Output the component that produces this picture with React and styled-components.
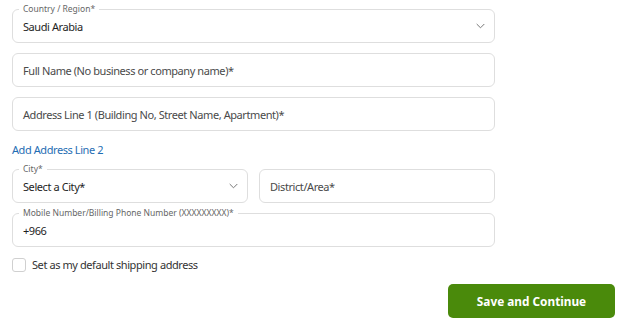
import React, { useState } from 'react';
import styled, { createGlobalStyle } from 'styled-components';

const GlobalStyle = createGlobalStyle`
  body {
    margin: 0;
    background: #fff;
    font-family: "Noto Sans", "Open Sans", sans-serif;
    color: #222;
  }
`

const Page = styled.div`
  display: flex;
  flex-direction: column;
  padding: 9px 9px 0 12px;
  width: 624px;
  box-sizing: border-box;
`

const Form = styled.div`
  display: flex;
  flex-direction: column;
  width: 483px;
`

const Row = styled.div`
  display: flex;
  gap: 11px;
  margin-top: ${p => p.$top || 0}px;
`

const Field = styled.div`
  position: relative;
  display: flex;
  align-items: center;
  box-sizing: border-box;
  height: 34px;
  width: ${p => p.$width ? `${p.$width}px` : 'auto'};
  flex: ${p => p.$grow ? '1 1 0' : 'none'};
  border: 1px solid #dedede;
  border-radius: 6px;
  padding: 0 9px 0 10px;
  margin-top: ${p => p.$top || 0}px;
  font-size: 11px;
  letter-spacing: -0.42px;
  color: ${p => p.$placeholder ? '#4a4a4a' : '#1e1e1e'};
`

const Legend = styled.span`
  position: absolute;
  top: -7px;
  left: 6px;
  padding: 0 4px;
  background: #fff;
  font-size: 8.5px;
  letter-spacing: 0;
  line-height: 12px;
  color: #666;
  white-space: nowrap;
`

const Value = styled.span`
  flex: 1;
  white-space: nowrap;
  padding-top: ${p => p.$shift ? 1 : 0}px;
`

const Link = styled.a`
  margin-top: 11px;
  font-size: 11px;
  letter-spacing: -0.42px;
  line-height: 16px;
  color: #1f6db3;
  text-decoration: none;
  cursor: pointer;
`

const CheckRow = styled.label`
  display: flex;
  align-items: center;
  gap: 6px;
  margin-top: 11px;
  font-size: 11px;
  letter-spacing: -0.42px;
  line-height: 14px;
  color: #333;
  cursor: pointer;
`

const Box = styled.span`
  width: 14px;
  height: 14px;
  box-sizing: border-box;
  border: 1px solid #d0d0d0;
  border-radius: 3px;
  background: ${p => p.$on ? '#4a8a0b' : '#fff'};
`

const Button = styled.button`
  align-self: flex-end;
  margin-top: 12px;
  width: 167px;
  height: 34px;
  border: none;
  border-radius: 5px;
  background: #4a8a0b;
  color: #fff;
  font-family: "Noto Sans", "Open Sans", sans-serif;
  font-weight: 700;
  font-size: 11.8px;
  cursor: pointer;
`

const Chevron = () => (
  <svg width="9" height="6" viewBox="0 0 9 6" fill="none">
    <path d="M0.7 1l3.8 3.8L8.3 1" stroke="#777" strokeWidth="1" />
  </svg>
)

const App = () => {
  const [isDefault, setIsDefault] = useState(false)

  return (
    <Page>
      <GlobalStyle />
      <Form>
        <Field>
          <Legend>Country / Region*</Legend>
          <Value $shift>Saudi Arabia</Value>
          <Chevron />
        </Field>
        <Field $top={10} $placeholder>
          <Value>Full Name (No business or company name)*</Value>
        </Field>
        <Field $top={10} $placeholder>
          <Value>Address Line 1 (Building No, Street Name, Apartment)*</Value>
        </Field>
        <Link>Add Address Line 2</Link>
        <Row $top={11}>
          <Field $width={236}>
            <Legend>City*</Legend>
            <Value $shift>Select a City*</Value>
            <Chevron />
          </Field>
          <Field $grow $placeholder>
            <Value>District/Area*</Value>
          </Field>
        </Row>
        <Field $top={10}>
          <Legend>Mobile Number/Billing Phone Number (XXXXXXXXX)*</Legend>
          <Value $shift>+966</Value>
        </Field>
        <CheckRow onClick={() => setIsDefault(!isDefault)}>
          <Box $on={isDefault} />
          Set as my default shipping address
        </CheckRow>
      </Form>
      <Button>Save and Continue</Button>
    </Page>
  )
}

export default App
